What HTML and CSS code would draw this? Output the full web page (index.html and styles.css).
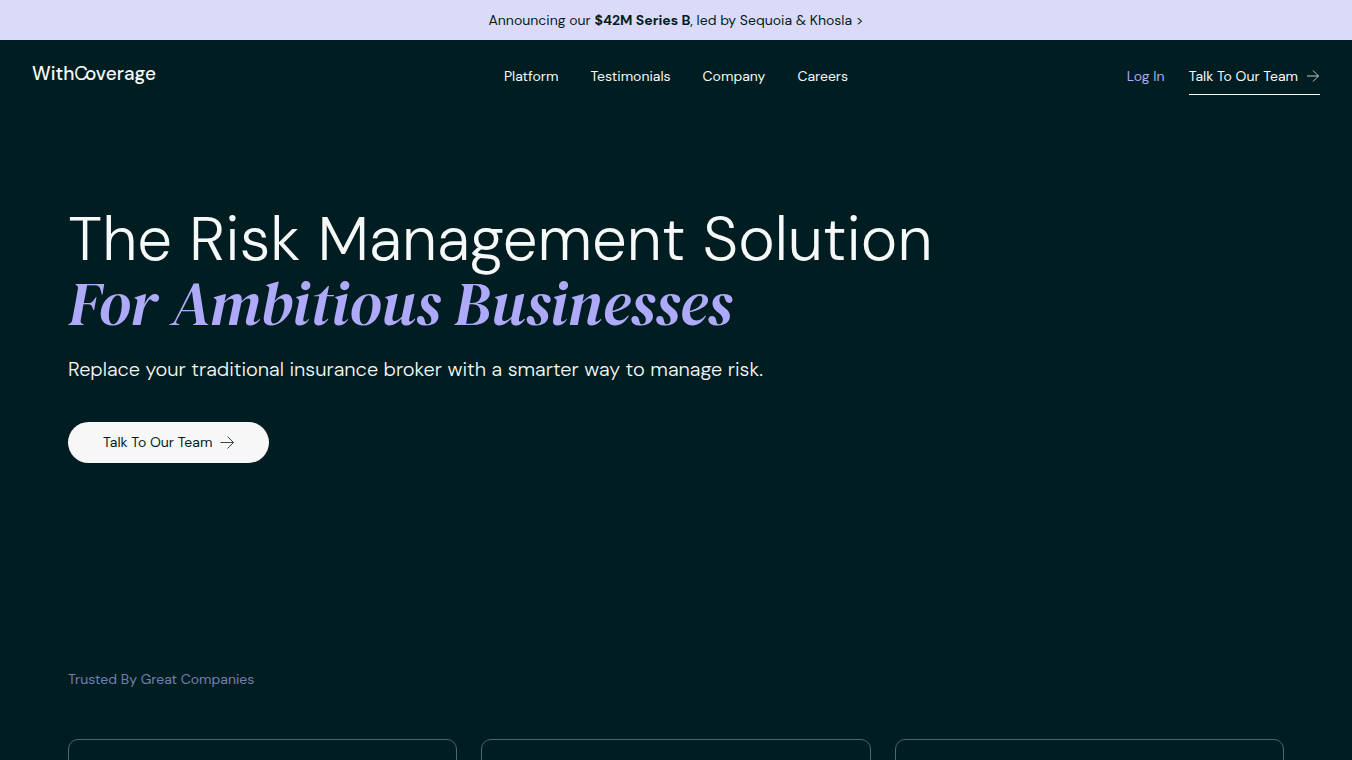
FILE: index.html
```html
<!DOCTYPE html>
<html lang="en">
<head>
  <meta charset="UTF-8" />
  <meta name="viewport" content="width=device-width, initial-scale=1.0" />
  <title>WithCoverage</title>
  <link rel="stylesheet" href="styles.css">
</head>
<body>
  <a class="announcement" href="#series-b">
    <span>Announcing our <strong>$42M Series B</strong>, led by Sequoia &amp; Khosla &gt;</span>
  </a>

  <header class="header">
    <a class="logo" href="#">With<span class="logo-c">C</span>overage</a>
    <nav class="nav">
      <a href="#platform">Platform</a>
      <a href="#testimonials">Testimonials</a>
      <a href="#company">Company</a>
      <a href="#careers">Careers</a>
    </nav>
    <div class="actions">
      <a class="login" href="#login">Log In</a>
      <a class="talk-link" href="#talk">
        Talk To Our Team
        <svg class="arrow arrow-thin" viewBox="0 0 14 14" aria-hidden="true"><path d="M1 7h11.500M7 1.500L12.500 7L7 12.500" /></svg>
      </a>
    </div>
  </header>

  <main class="container">
    <section class="hero">
      <h1>The Risk Management Solution <em>For Ambitious Businesses</em></h1>
      <p>Replace your traditional insurance broker with a smarter way to manage risk.</p>
      <button class="talk-btn" type="button">
        Talk To Our Team
        <svg class="arrow arrow-thin" viewBox="0 0 14 14" aria-hidden="true"><path d="M0.500 7.500h13M7.500 1.500L13.500 7.500l-6 6" /></svg>
      </button>
    </section>

    <section class="trusted">
      <h2>Trusted By Great Companies</h2>
      <div class="cards">
        <div class="card"></div>
        <div class="card"></div>
        <div class="card"></div>
      </div>
    </section>
  </main>
</body>
</html>
```
FILE: styles.css
```css
* {
  box-sizing: border-box;
}
body {
  margin: 0;
  background-color: #001e21;
  color: #f7f8f8;
  font-family: "DM Sans", Inter, "Liberation Sans", sans-serif;
  font-size: 14px;
  line-height: 20px;
}
a {
  color: inherit;
  text-decoration: none;
}
.announcement {
  display: block;
  padding: 10px;
  background-color: #dcdaf9;
  color: #001e21;
  text-align: center;
}
.header {
  display: grid;
  grid-template-columns: 1fr auto 1fr;
  align-items: start;
  padding: 26px 32px 0;
}
.logo {
  font-size: 19px;
  line-height: 16px;
  font-weight: 500;
}
.logo-c {
  margin-right: -3px;
  font-weight: 400;
}
.nav {
  display: flex;
  gap: 32px;
}
.actions {
  display: flex;
  justify-content: flex-end;
  gap: 24px;
}
.login {
  color: #aea9f8;
}
.talk-link {
  display: flex;
  align-items: center;
  gap: 8px;
  padding-bottom: 8px;
  border-bottom: 1px solid #fff;
}
.arrow {
  width: 14px;
  height: 14px;
  fill: none;
  stroke: currentColor;
}
.arrow-thin {
  opacity: 0.8;
}
.container {
  max-width: 1216px;
  margin: 0 auto;
}
.hero {
  padding-top: 111px;
}
h1 {
  margin: 0;
  font-size: 62px;
  line-height: 65px;
  font-weight: 300;
}
h1 em {
  display: block;
  color: #aea9f8;
  font-family: "DM Serif Display", "Liberation Serif", serif;
  font-weight: 400;
}
.hero p {
  margin: 17px 0 37px;
  font-size: 20px;
  line-height: 32px;
  font-weight: 300;
}
.talk-btn {
  display: flex;
  align-items: center;
  gap: 8px;
  padding: 10px 35px 11px;
  border: none;
  border-radius: 24px;
  background-color: #f7f7f7;
  color: #001e21;
  font: inherit;
  cursor: pointer;
}
.trusted {
  padding-top: 206px;
}
.trusted h2 {
  margin: 0 0 50px;
  color: #757eb1;
  font-size: 14px;
  font-weight: 400;
}
.cards {
  display: grid;
  grid-template-columns: repeat(3, 1fr);
  gap: 24px;
}
.card {
  height: 160px;
  border: 1px solid #49696b;
  border-radius: 10px;
}
```
